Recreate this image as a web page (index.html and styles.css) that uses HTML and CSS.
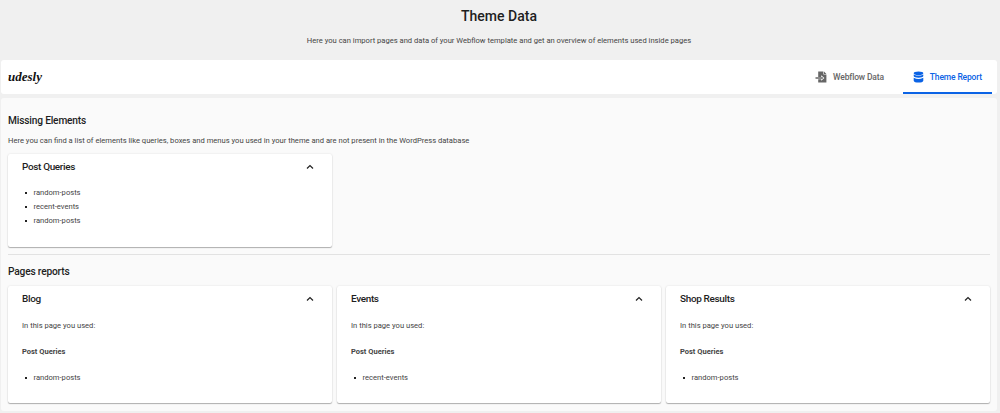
FILE: index.html
```html
<!DOCTYPE html>
<html lang="en">
<head>
<meta charset="utf-8">
<title>Theme Data</title>
<link rel="stylesheet" href="styles.css">
</head>
<body>
<header class="intro">
  <h1 class="title">Theme Data</h1>
  <p class="text subtitle"><span>Here you can import pages and data of your Webflow template and get an overview of elements used inside pages</span></p>
</header>
<nav class="bar">
  <span class="logo">udesly</span>
  <div class="tabs">
    <a class="tab">
      <svg class="tab-icon" viewBox="0 0 13 12"><path fill="currentColor" fill-rule="evenodd" d="M3.200 .5h5.200v3h3v8H3.200V8.200h3v1.600L9.400 7 6.200 4.200v1.700h-3zM9 .5 11.400 2.900H9zM.5 6.300h6.400V5.800L8.200 7 6.900 8.200V7.700H.5z"/></svg>
      <span>Webflow Data</span>
    </a>
    <a class="tab tab-active">
      <svg class="tab-icon" viewBox="0 0 13 12"><g fill="currentColor"><ellipse cx="6.500" cy="2.200" rx="4.800" ry="1.800"/><path d="M1.700 3.400Q6.500 5.800 11.300 3.400V5C11.300 7.300 1.700 7.300 1.700 5zM1.700 6.700Q6.500 9.100 11.300 6.700V9.700C11.300 12.200 1.700 12.200 1.700 9.700z"/></g></svg>
      <span>Theme Report</span>
    </a>
  </div>
</nav>
<main class="panel">
  <h2 class="heading">Missing Elements</h2>
  <p class="text lead"><span>Here you can find a list of elements like queries, boxes and menus you used in your theme and are not present in the WordPress database</span></p>
  <div class="grid">
    <section class="card card-missing">
      <div class="card-head"><h3 class="card-title">Post Queries</h3><svg class="chevron" viewBox="0 0 8 6"><path d="M1 4.500 4 1.500 7 4.500"/></svg></div>
      <ul class="text list"><li>random-posts</li><li>recent-events</li><li>random-posts</li></ul>
    </section>
  </div>
  <hr class="rule">
  <h2 class="heading heading-pages">Pages reports</h2>
  <div class="grid">
    <section class="card card-page">
      <div class="card-head"><h3 class="card-title">Blog</h3><svg class="chevron" viewBox="0 0 8 6"><path d="M1 4.500 4 1.500 7 4.500"/></svg></div>
      <p class="text used">In this page you used:</p>
      <h4 class="text group">Post Queries</h4>
      <ul class="text list"><li>random-posts</li></ul>
    </section>
    <section class="card card-page">
      <div class="card-head"><h3 class="card-title">Events</h3><svg class="chevron" viewBox="0 0 8 6"><path d="M1 4.500 4 1.500 7 4.500"/></svg></div>
      <p class="text used">In this page you used:</p>
      <h4 class="text group">Post Queries</h4>
      <ul class="text list"><li>recent-events</li></ul>
    </section>
    <section class="card card-page">
      <div class="card-head"><h3 class="card-title">Shop Results</h3><svg class="chevron" viewBox="0 0 8 6"><path d="M1 4.500 4 1.500 7 4.500"/></svg></div>
      <p class="text used">In this page you used:</p>
      <h4 class="text group">Post Queries</h4>
      <ul class="text list"><li>random-posts</li></ul>
    </section>
  </div>
</main>
</body>
</html>
```
FILE: styles.css
```css
* { box-sizing: border-box; }
body { margin: 0; height: 413px; overflow: hidden; background: #f0f0f0; color: #1e1e1e; font-family: Roboto, "Liberation Sans", sans-serif; }
h1, h2, h3, h4, p, ul { margin: 0; padding: 0; }
.intro { height: 60px; padding-top: 6px; text-align: center; }
.title { font-size: 14px; line-height: 20px; font-weight: 500; padding-right: 2px; }
.text { font-size: 7.600px; line-height: 14px; color: #444; }
.subtitle { margin-top: 8px; padding-right: 2px; }
.bar { display: flex; justify-content: space-between; height: 34px; margin: 0 3px 0 1px; padding: 0 5px 0 7px; background: #fff; border-radius: 3px; }
.logo { font-family: "Liberation Serif", serif; font-size: 13px; line-height: 34px; font-weight: 700; font-style: italic; color: #111; }
.tabs { display: flex; gap: 9px; }
.tab { display: flex; align-items: center; gap: 5px; height: 34px; padding: 0 10px 0 9px; font-size: 8.500px; letter-spacing: -.16px; font-weight: 500; color: #666; }
.tab-active { color: #0b63e5; border-bottom: 2px solid #0b63e5; padding-top: 2px; }
.tab-icon { width: 13px; height: 12px; }
.panel { height: 313px; margin: 4px 3px 0 1px; padding: 14px 7px 0; background: #fafafa; border-radius: 3px; }
.heading { font-size: 10.200px; letter-spacing: -.18px; line-height: 16px; font-weight: 500; padding-top: 1px; }
.lead { margin: 5px 0 6px; }
.grid { display: grid; grid-template-columns: repeat(3, 1fr); column-gap: 5px; }
.card { padding: 6px 14px 0; background: #fff; border-radius: 2px; box-shadow: 0 1px 1px rgba(0,0,0,.28), 0 0 2px rgba(0,0,0,.12); }
.card-missing { height: 93px; }
.card-page { height: 117px; }
.card-head { display: flex; align-items: center; justify-content: space-between; height: 14px; }
.card-title { font-size: 9.960px; letter-spacing: -.34px; line-height: 14px; font-weight: 500; }
.chevron { width: 8px; height: 6px; margin-right: 4px; fill: none; stroke: #222; stroke-width: 1.200; }
.list { list-style: none; margin-top: 12px; }
.list li { display: flex; align-items: center; gap: 7px; padding-left: 2.500px; }
.list li::before { content: ""; width: 2px; height: 2px; background: #222; }
.used { margin-top: 13px; }
.group { margin-top: 12px; font-size: 7.500px; font-weight: 700; }
.rule { height: 1px; margin: 7px 0 8px; border: 0; background: #e2e2e2; }
.heading-pages { margin-bottom: 6px; }
```
